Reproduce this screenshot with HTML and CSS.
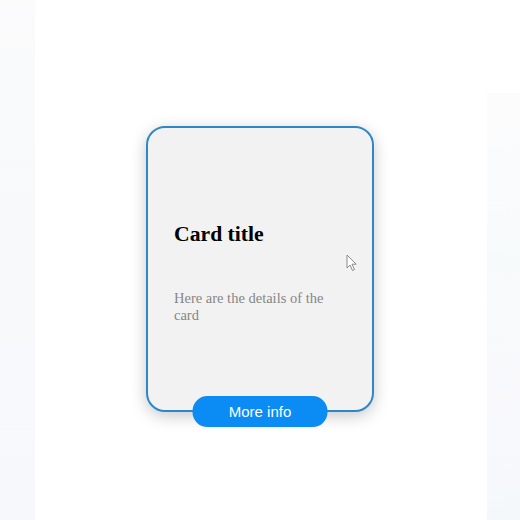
FILE: index.html
```html
<!DOCTYPE html>
<html>
<head>
<meta charset="utf-8">
<link rel="stylesheet" href="styles.css">
</head>
<body>
<div class="page">
  <div class="side side-left"></div>
  <div class="stage">
    <div class="card">
      <div class="card-details">
        <p class="text-title">Card title</p>
        <p class="text-body">Here are the details of the card</p>
      </div>
      <button class="card-button">More info</button>
    </div>
    <svg class="cursor" width="12" height="18" viewBox="0 0 12 18">
      <path d="M1 1 L1 14 L4 11 L6.5 16.5 L8.5 15.6 L6 10.2 L10.2 10.2 Z" fill="#fff" stroke="#8a8a8a" stroke-width="1" stroke-linejoin="round"/>
    </svg>
  </div>
  <div class="side side-right"></div>
</div>
</body>
</html>
```
FILE: styles.css
```css
html, body {
  margin: 0;
  padding: 0;
  background: #ffffff;
}

.page {
  display: flex;
  width: 520px;
  height: 520px;
  overflow: hidden;
}

.side {
  flex: none;
}

.side-left {
  width: 35px;
  background: linear-gradient(180deg, #fbfbfc 0%, #f7f9fb 40%, #f8f9fc 70%, #f6f8fb 100%);
}

.side-right {
  width: 33px;
  margin-top: 93px;
  background: linear-gradient(180deg, #fcfcfd 0%, #f7fafb 40%, #f9f9fc 65%, #f5f8fb 100%);
}

.stage {
  flex: 1;
  position: relative;
  display: flex;
  justify-content: center;
  align-items: flex-start;
  padding-top: 126px;
  padding-right: 2px;
}

.card {
  position: relative;
  box-sizing: border-box;
  width: 228px;
  height: 286px;
  padding: 26px;
  border: 2px solid #2e88c8;
  border-radius: 19px;
  background: #f2f2f2;
  box-shadow: 0 4px 16px 0 rgba(0, 0, 0, 0.22);
}

.card-details {
  height: 100%;
  display: grid;
  place-content: center;
  gap: 7px;
  color: #000;
  font-family: "Liberation Serif", "Times New Roman", serif;
}

.text-title {
  margin: 21.7px 0;
  font-size: 21.7px;
  font-weight: bold;
}

.text-body {
  margin: 14.5px 0;
  font-size: 14.5px;
  color: #868686;
}

.card-button {
  position: absolute;
  left: 50%;
  bottom: 0;
  transform: translate(-50%, 55%);
  width: 135px;
  height: 31px;
  padding: 0;
  border: none;
  border-radius: 15px;
  background: #0a8cf4;
  color: #ffffff;
  font-family: "Liberation Sans", Arial, sans-serif;
  font-size: 15px;
}

.cursor {
  position: absolute;
  left: 311px;
  top: 254px;
}
```
